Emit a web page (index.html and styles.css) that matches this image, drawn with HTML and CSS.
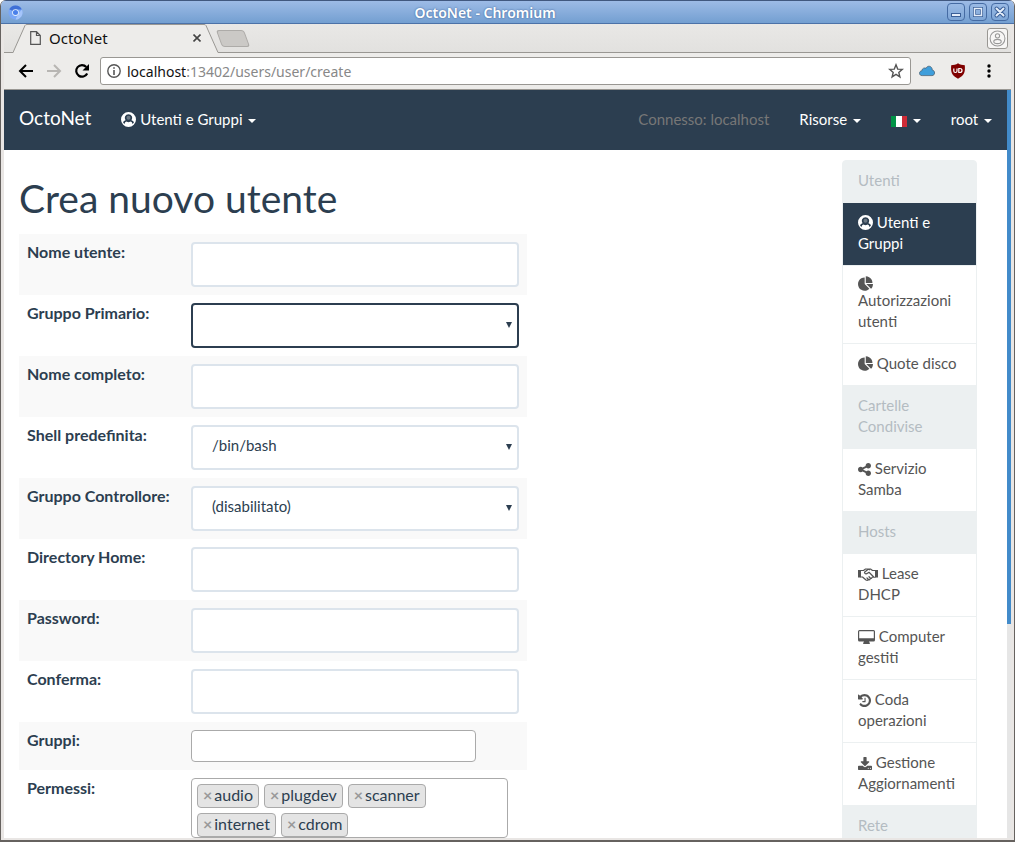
FILE: index.html
```html
<!DOCTYPE html>
<html lang="it">

<head>
  <meta charset="UTF-8">
  <title>OctoNet</title>
  <link rel="stylesheet" href="styles.css">
</head>

<body>
  <!-- icon set -->
  <svg class="sprite" aria-hidden="true">
    <symbol id="user" viewBox="0 0 30 30">
      <path fill-rule="evenodd" d="M15 0a15 15 0 1 1 0 30a15 15 0 0 1 0-30zM15 4.500a7.500 7.500 0 0 0-6 12q-3.500.8-5 4q1.500 2.500 3 3.500q.5-4.500 4-5q4 2.500 8 0q3.500.5 4 5q1.500-1 3-3.500q-1.500-3.200-5-4a7.500 7.500 0 0 0-6-12z" />
      <circle cx="15" cy="11.500" r="4" opacity=".3" />
    </symbol>
    <symbol id="pie" viewBox="0 0 1728 1664">
      <path d="M768 890l546 546q-106 108-247.500 168t-298.500 60q-209 0-385.500-103t-279.500-279.500-103-385.500 103-385.500 279.500-279.500 385.500-103v762zm187 6h773q0 157-60 298.500t-168 247.500zm709-128h-768v-768q209 0 385.500 103t279.500 279.500 103 385.500z" />
    </symbol>
    <symbol id="share" viewBox="128 128 1536 1536">
      <path d="M1344 1024q133 0 226.500 93.500t93.500 226.500-93.500 226.500-226.500 93.500-226.500-93.500-93.500-226.500q0-12 2-34l-360-180q-92 86-218 86-133 0-226.500-93.500t-93.500-226.500 93.500-226.500 226.500-93.500q126 0 218 86l360-180q-2-22-2-34 0-133 93.500-226.500t226.500-93.500 226.500 93.500 93.500 226.500-93.500 226.500-226.500 93.500q-126 0-218-86l-360 180q2 22 2 34t-2 34l360 180q92-86 218-86z" />
    </symbol>
    <symbol id="handshake" viewBox="0 0 40 26">
      <path d="M0 4h6v15H0zM34 4h6v15h-6z" />
      <path fill="none" stroke="currentColor" stroke-width="2.400" stroke-linejoin="round" stroke-linecap="round" d="M6 5h5l4-3h5l3 1.500M34 5h-5l-4-3h-4l-8 6.500c0 3 3 4.500 6 2l3-2l9 9M6 18h3l7 6c2 1 3.500.5 4.500-.5c2 .5 3.500-.3 4-2c2 0 3.500-1 3.500-3h6M18 20l3 3M22 17.500l3 3" />
    </symbol>
    <symbol id="desktop" viewBox="0 0 17 14">
      <path fill-rule="evenodd" d="M1.500 0h14a1.500 1.500 0 0 1 1.500 1.500v8.500a1.500 1.500 0 0 1-1.500 1.500h-4.500l.8 1.600v.9H5.200v-.9l.8-1.600H1.500A1.500 1.500 0 0 1 0 10V1.500A1.500 1.500 0 0 1 1.500 0zM1.200 1.200v7h14.600v-7z" />
    </symbol>
    <symbol id="history" viewBox="128 128 1536 1536">
      <path d="M1664 896q0 156-61 298t-164 245-245 164-298 61q-172 0-327-72.500t-264-204.500q-7-10-6.500-22.500t8.500-20.500l137-138q10-9 25-9 16 2 23 12 73 95 179 147t225 52q104 0 198.500-40.500t163.500-109.500 109.500-163.500 40.500-198.500-40.500-198.500-109.500-163.500-163.500-109.500-198.500-40.500q-98 0-188 35.500t-160 101.500l137 138q31 30 14 69-17 40-59 40h-448q-26 0-45-19t-19-45v-448q0-42 40-59 39-17 69 14l130 129q107-101 244.500-156.500t284.500-55.500q156 0 298 61t245 164 164 245 61 298zm-640-288v448q0 14-9 23t-23 9h-320q-14 0-23-9t-9-23v-64q0-14 9-23t23-9h224v-352q0-14 9-23t23-9h64q14 0 23 9t9 23z" />
    </symbol>
    <symbol id="download" viewBox="64 0 1664 1536">
      <path d="M1344 1344q0-26-19-45t-45-19-45 19-19 45 19 45 45 19 45-19 19-45zm256 0q0-26-19-45t-45-19-45 19-19 45 19 45 45 19 45-19 19-45zm128-224v320q0 40-28 68t-68 28h-1472q-40 0-68-28t-28-68v-320q0-40 28-68t68-28h465l135 136q58 56 136 56t136-56l136-136h464q40 0 68 28t28 68zm-325-569q17 41-14 70l-448 448q-18 19-45 19t-45-19l-448-448q-31-29-14-70 17-39 59-39h256v-448q0-26 19-45t45-19h256q26 0 45 19t19 45v448h256q42 0 59 39z" />
    </symbol>
  </svg>

  <div class="window">
    <header class="titlebar">
      <svg class="app-icon" viewBox="0 0 16 16">
        <circle cx="8" cy="8" r="7.500" fill="#7aa7f5" />
        <path d="M8 8L1.300 4.500A7.500 7.500 0 0 1 14.800 4.800H8z" fill="#3f6fd6" />
        <path d="M14.800 4.800A7.500 7.500 0 0 1 8 15.500L11 9z" fill="#a5c5fa" />
        <circle cx="8" cy="8" r="3.600" fill="#e4eefc" />
        <circle cx="8" cy="8" r="2.700" fill="#4a80ea" />
      </svg>
      <span class="window-title">OctoNet - Chromium</span>
      <div class="window-buttons">
        <button aria-label="Minimize"><svg viewBox="0 0 16 16"><rect x="3.500" y="9.500" width="9" height="3" fill="#e4edf9" stroke="#3a5f98" /></svg></button>
        <button aria-label="Maximize"><svg viewBox="0 0 16 16"><rect x="4.500" y="4.500" width="7" height="7" fill="none" stroke="#3a5f98" stroke-width="3" /><rect x="4.500" y="4.500" width="7" height="7" fill="none" stroke="#e4edf9" stroke-width="1.500" /></svg></button>
        <button aria-label="Close"><svg viewBox="0 0 16 16"><path d="M4.500 4.500l7 7M11.500 4.500l-7 7" stroke="#3a5f98" stroke-width="4" stroke-linecap="round" /><path d="M4.500 4.500l7 7M11.500 4.500l-7 7" stroke="#e4edf9" stroke-width="2" stroke-linecap="round" /></svg></button>
      </div>
    </header>

    <div class="tabs">
      <div class="tab">
        <svg class="tab-shape" viewBox="0 0 206 29">
          <path d="M0 29L12 1.500Q12.500.5 14 .5H191Q192.500.5 193 1.500L205 28.500V29z" fill="#edecea" />
          <path d="M0 28.500L12 1.500Q12.500.5 14 .5H191Q192.500.5 193 1.500L205 28.500" fill="none" stroke="#999793" />
        </svg>
        <svg class="page-icon" viewBox="0 0 11 14"><path d="M.7.700H6.500L10.300 4.500V13.300H.7zM6.500.700V4.500H10.300" fill="none" stroke="#555" stroke-width="1.200" /></svg>
        <span class="tab-title">OctoNet</span>
        <button class="tab-close" aria-label="Close tab"><svg viewBox="0 0 8 8"><path d="M.5.500l7 7M7.500.500l-7 7" stroke="#444" stroke-width="1.600" /></svg></button>
      </div>
      <button class="new-tab" aria-label="New tab"></button>
      <button class="profile" aria-label="Profile">
        <svg viewBox="0 0 16 16" fill="none" stroke="#999"><circle cx="8" cy="8" r="7" /><circle cx="8" cy="5.500" r="2" /><ellipse cx="8" cy="10.800" rx="3.500" ry="2" /></svg>
      </button>
    </div>

    <div class="toolbar">
      <button class="tool" aria-label="Back"><svg viewBox="0 0 16 16"><path d="M15 8H2.500M8 2L2 8l6 6" fill="none" stroke="#000" stroke-width="2" /></svg></button>
      <button class="tool" aria-label="Forward"><svg viewBox="0 0 16 16"><path d="M1 8h12.500M8 2l6 6-6 6" fill="none" stroke="#b8b6b3" stroke-width="2" /></svg></button>
      <button class="tool" aria-label="Reload"><svg viewBox="0 0 16 16"><path d="M13.200 10.500A5.800 5.800 0 1 1 12.300 4" fill="none" stroke="#000" stroke-width="2.200" /><path d="M15 1v6.500H8.500z" /></svg></button>
      <div class="address">
        <svg class="info" viewBox="0 0 14 14"><circle cx="7" cy="7" r="6.200" fill="none" stroke="#555" stroke-width="1.400" /><path d="M6.200 3.200h1.600v1.600H6.200zM6.200 6h1.600v5H6.200z" fill="#555" /></svg>
        <label for="url">localhost</label>
        <input type="text" id="url" value=":13402/users/user/create">
        <button class="star" aria-label="Bookmark"><svg viewBox="0 0 16 16"><path d="M8 1.800l1.700 4.300 4.600.300-3.500 3 1.100 4.500L8 11.400l-3.900 2.500 1.100-4.500-3.500-3 4.600-.3z" fill="none" stroke="#555" stroke-width="1.400" /></svg></button>
      </div>
      <div class="extensions">
        <button class="tool" aria-label="Cloud"><svg viewBox="0 0 16 16"><path d="M3.200 12.600C-.5 12.600-.2 8 2.800 7.800C3 5 6 4.500 7 5.300C8.500 1.800 13.500 3 13.200 7C16.500 7.500 16.300 12.600 13 12.600z" fill="#3f9edb" stroke="#4b6478" stroke-width=".8" /></svg></button>
        <button class="tool" aria-label="uBlock"><svg viewBox="0 0 16 16"><path d="M8 .3C6 1.800 3.500 2 1.200 2.200C.8 8.500 1 12 8 15.700C15 12 15.200 8.500 14.800 2.200C12.500 2 10 1.800 8 .3z" fill="#800000" /><path d="M3.800 5.500v2.500q0 1.500 1.600 1.500t1.600-1.500V5.500M8.800 5.500v4h1q2.200 0 2.200-2t-2.200-2z" fill="none" stroke="#fff" stroke-width="1.200" /></svg></button>
        <button class="tool" aria-label="Menu"><svg viewBox="0 0 16 16"><circle cx="8" cy="3" r="1.700" /><circle cx="8" cy="8" r="1.700" /><circle cx="8" cy="13" r="1.700" /></svg></button>
      </div>
    </div>

    <div class="viewport">
      <div class="page">
        <nav class="navbar">
          <a class="brand" href="#">OctoNet</a>
          <a class="nav-link" href="#"><svg class="icon" width="15" height="15"><use href="#user" /></svg> Utenti e Gruppi <span class="caret"></span></a>
          <div class="navbar-right">
            <span class="nav-text">Connesso: localhost</span>
            <a class="nav-link" href="#">Risorse <span class="caret"></span></a>
            <a class="nav-link" href="#" aria-label="Italiano"><span class="flag"></span> <span class="caret"></span></a>
            <a class="nav-link" href="#">root <span class="caret"></span></a>
          </div>
        </nav>

        <div class="content">
          <main>
            <h1>Crea nuovo utente</h1>
            <form id="userForm">
              <table class="form-table">
                <tr>
                  <th><label for="username">Nome utente:</label></th>
                  <td><input class="form-control" type="text" id="username"></td>
                </tr>
                <tr>
                  <th><label for="primaryGroup">Gruppo Primario:</label></th>
                  <td><div class="select"><select class="form-control focused" id="primaryGroup"><option></option></select></div></td>
                </tr>
                <tr>
                  <th><label for="fullName">Nome completo:</label></th>
                  <td><input class="form-control" type="text" id="fullName"></td>
                </tr>
                <tr>
                  <th><label for="shell">Shell predefinita:</label></th>
                  <td><div class="select"><select class="form-control" id="shell"><option>/bin/bash</option></select></div></td>
                </tr>
                <tr>
                  <th><label for="controllerGroup">Gruppo Controllore:</label></th>
                  <td><div class="select"><select class="form-control" id="controllerGroup"><option>(disabilitato)</option></select></div></td>
                </tr>
                <tr>
                  <th><label for="home">Directory Home:</label></th>
                  <td><input class="form-control" type="text" id="home"></td>
                </tr>
                <tr>
                  <th><label for="password">Password:</label></th>
                  <td><input class="form-control" type="password" id="password"></td>
                </tr>
                <tr>
                  <th><label for="confirm">Conferma:</label></th>
                  <td><input class="form-control" type="password" id="confirm"></td>
                </tr>
                <tr>
                  <th><label for="groups">Gruppi:</label></th>
                  <td><input class="groups" type="text" id="groups"></td>
                </tr>
                <tr>
                  <th id="permissionsLabel">Permessi:</th>
                  <td>
                    <ul class="tags" aria-labelledby="permissionsLabel">
                      <li><button type="button">×</button>audio</li>
                      <li><button type="button">×</button>plugdev</li>
                      <li><button type="button">×</button>scanner</li>
                      <li><button type="button">×</button>internet</li>
                      <li><button type="button">×</button>cdrom</li>
                    </ul>
                  </td>
                </tr>
              </table>
            </form>
          </main>

          <aside class="list-group">
            <div class="list-item heading">Utenti</div>
            <a class="list-item active" href="#"><svg class="icon" width="15" height="15"><use href="#user" /></svg> Utenti e Gruppi</a>
            <a class="list-item" href="#"><svg class="icon icon-line" width="15" height="15"><use href="#pie" /></svg> Autorizzazioni utenti</a>
            <a class="list-item" href="#"><svg class="icon" width="15" height="15"><use href="#pie" /></svg> Quote disco</a>
            <div class="list-item heading">Cartelle Condivise</div>
            <a class="list-item" href="#"><svg class="icon" width="13" height="13"><use href="#share" /></svg> Servizio Samba</a>
            <div class="list-item heading">Hosts</div>
            <a class="list-item" href="#"><svg class="icon" width="20" height="13"><use href="#handshake" /></svg> Lease DHCP</a>
            <a class="list-item" href="#"><svg class="icon" width="17" height="14"><use href="#desktop" /></svg> Computer gestiti</a>
            <a class="list-item" href="#"><svg class="icon" width="13" height="13"><use href="#history" /></svg> Coda operazioni</a>
            <a class="list-item" href="#"><svg class="icon" width="14" height="13"><use href="#download" /></svg> Gestione Aggiornamenti</a>
            <div class="list-item heading">Rete</div>
          </aside>
        </div>
      </div>
      <div class="scrollbar"><div class="thumb"></div></div>
    </div>
  </div>
</body>

</html>
```
FILE: styles.css
```css
* {
  box-sizing: border-box;
}

body {
  margin: 0;
  font-family: Lato, sans-serif;
  font-size: 15px;
  line-height: 21px;
  color: #2c3e50;
  background: #fff;
}

button {
  padding: 0;
  border: none;
  background: none;
  cursor: pointer;
}

button svg {
  display: block;
}

a {
  text-decoration: none;
}

.sprite {
  position: absolute;
  width: 0;
  height: 0;
}

/* browser window */
.window {
  display: flex;
  flex-direction: column;
  height: 100vh;
  overflow: hidden;
  background: #e9e6e4;
  border: 1px solid #66625f;
  border-top: none;
  border-bottom-width: 2px;
  border-radius: 6px 6px 0 0;
}

.titlebar {
  display: flex;
  flex: none;
  align-items: center;
  height: 24px;
  padding: 0 5px 0 7px;
  background: linear-gradient(#9dbbe6, #739fd1);
  border-top: 1px solid #41587f;
  border-bottom: 1px solid #4c72a8;
}

.app-icon {
  width: 15px;
  height: 15px;
}

.window-title {
  flex: 1;
  text-align: center;
  font-family: "Noto Sans", sans-serif;
  font-size: 14px;
  font-weight: 600;
  color: #fff;
  text-shadow: 0 0 2px #34588f;
}

.window-buttons {
  display: flex;
  gap: 4px;
}

.window-buttons button {
  width: 18px;
  height: 18px;
  border: 1px solid #456ba3;
  border-radius: 4px;
  background: linear-gradient(#9abae5, #7ea6d6);
}

.tabs {
  display: flex;
  flex: none;
  align-items: center;
  height: 29px;
  margin: 0 3px;
  padding: 0 3px 0 9px;
  background: linear-gradient(#e9e8e6, #e2e1df);
  border-bottom: 1px solid #999793;
  font-family: "Noto Sans", sans-serif;
}

.tab {
  position: relative;
  display: flex;
  align-items: center;
  width: 206px;
  height: 29px;
  padding: 0 18px 0 17px;
}

.tab-shape {
  position: absolute;
  top: 0;
  left: 0;
  width: 100%;
  height: 100%;
}

.page-icon {
  position: relative;
  width: 11px;
  height: 14px;
}

.tab-title {
  position: relative;
  flex: 1;
  padding-left: 8px;
  font-size: 15px;
  color: #111;
}

.tab-close {
  position: relative;
}

.tab-close svg {
  width: 8px;
  height: 8px;
}

.new-tab {
  width: 28px;
  height: 17px;
  border: 1px solid #adaba8;
  border-radius: 3px;
  background: #cbc9c6;
  transform: skewX(20deg);
}

.profile {
  width: 21px;
  height: 21px;
  margin-left: auto;
  padding: 1px;
  border: 1px solid #999793;
  border-radius: 3px;
  background: #f7f6f5;
}

.toolbar {
  display: flex;
  flex: none;
  align-items: center;
  gap: 12px;
  height: 37px;
  margin: 0 3px;
  padding: 0 14px;
  background: #edecea;
  border-bottom: 1px solid #999793;
}

.tool svg {
  width: 16px;
  height: 16px;
}

.address {
  display: flex;
  flex: 1;
  align-items: center;
  height: 28px;
  margin-left: -2px;
  margin-right: -4px;
  padding: 0 6px;
  background: #fff;
  border: 1px solid #999793;
  border-radius: 3px;
  font-family: "Noto Sans", sans-serif;
  font-size: 14px;
}

.info {
  width: 14px;
  height: 14px;
  margin-right: 6px;
}

.address label {
  color: #111;
}

.address input {
  flex: 1;
  min-width: 0;
  padding: 0;
  border: none;
  outline: none;
  font: inherit;
  color: #888;
}

.star svg {
  width: 16px;
  height: 16px;
}

.extensions {
  display: flex;
  gap: 15px;
}

/* page */
.viewport {
  display: flex;
  flex: 1;
  min-height: 0;
  margin: 0 3px 2px;
}

.page {
  flex: 1;
  overflow: hidden;
  background: #fff;
}

.scrollbar {
  width: 4px;
  background: #e6e6e6;
}

.thumb {
  height: calc(100% * 5 / 7);
  background: #428bca;
}

.icon {
  vertical-align: -2px;
  fill: currentColor;
}

.icon-line {
  display: block;
  margin: 1px 0 -1px;
}

.navbar {
  display: flex;
  align-items: center;
  height: 60px;
  padding: 0 15px 2px;
  background: #2c3e50;
}

.navbar a {
  color: #fff;
}

.navbar .brand {
  margin-right: 30px;
  padding-bottom: 3px;
  font-size: 19px;
}

.navbar-right {
  display: flex;
  gap: 30px;
  margin-left: auto;
}

.nav-text {
  color: #777;
}

.caret {
  display: inline-block;
  margin-left: 2px;
  vertical-align: middle;
  border-top: 4px solid;
  border-left: 4px solid transparent;
  border-right: 4px solid transparent;
}

.flag {
  display: inline-block;
  width: 16px;
  height: 11px;
  vertical-align: -2px;
  background: linear-gradient(90deg, #009246 33%, #fff 33%, #fff 67%, #ce2b37 67%);
}

.content {
  display: flex;
  justify-content: space-between;
  padding: 10px 30px 0 15px;
}

h1 {
  margin: 17px 0 14px;
  font-size: 39px;
  font-weight: 400;
  line-height: 43px;
}

.form-table {
  border-collapse: collapse;
  line-height: 20px;
}

.form-table tr:nth-child(odd) {
  background: #f9f9f9;
}

.form-table th,
.form-table td {
  padding: 8px;
  text-align: left;
  vertical-align: top;
  font-size: 16px;
}

.form-table th {
  width: 164px;
  white-space: nowrap;
}

.form-control {
  display: block;
  width: 328px;
  height: 45px;
  padding: 0 19px;
  border: 2px solid #dce4ec;
  border-radius: 4px;
  outline: none;
  background: #fff;
  color: #2c3e50;
  font: inherit;
  font-size: 15px;
}

select.form-control {
  appearance: none;
  padding-bottom: 5px;
}

.form-control.focused {
  border-color: #2c3e50;
}

.select {
  position: relative;
}

.select::after {
  content: "";
  position: absolute;
  top: 19px;
  right: 7px;
  border-top: 6px solid #2c3e50;
  border-left: 3px solid transparent;
  border-right: 3px solid transparent;
  pointer-events: none;
}

.groups {
  display: block;
  width: 285px;
  height: 32px;
  padding: 0 5px;
  border: 1px solid #aaa;
  border-radius: 4px;
  background: #fff;
  font: inherit;
}

.tags {
  display: flex;
  flex-wrap: wrap;
  gap: 5px;
  width: 317px;
  margin: 0;
  padding: 5px 5px 0;
  list-style: none;
  border: 1px solid #aaa;
  border-radius: 4px;
}

.tags li {
  height: 24px;
  padding: 0 5px;
  border: 1px solid #aaa;
  border-radius: 4px;
  background: #e4e4e4;
}

.tags button {
  margin-right: 2px;
  color: #999;
  font: inherit;
  font-weight: bold;
}

/* side menu */
.list-group {
  width: 135px;
}

.list-item {
  display: block;
  margin-bottom: -1px;
  padding: 9px 15px 11px;
  border: 1px solid #ecf0f1;
  background: #fff;
  color: #555;
}

.list-item:first-child {
  border-radius: 4px 4px 0 0;
}

.list-item.heading {
  background: #ecf0f1;
  color: #b4bcc2;
}

.list-item.active {
  position: relative;
  background: #2c3e50;
  color: #fff;
}
```
